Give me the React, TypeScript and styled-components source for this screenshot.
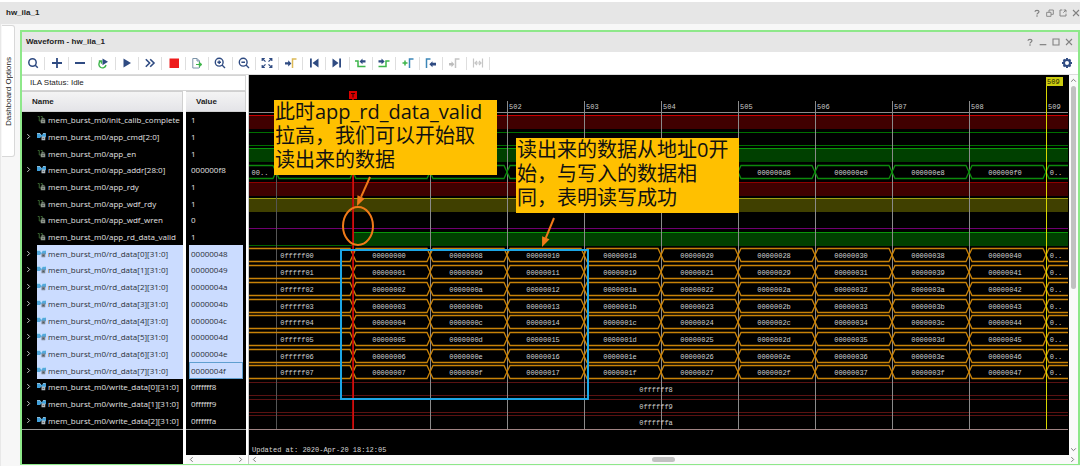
import React from 'react';
import styled, { createGlobalStyle } from 'styled-components';

const GlobalStyle = createGlobalStyle`
  * { box-sizing: border-box; }
  body {
    margin: 0;
    background: #f7f7f7;
    font-family: "Liberation Sans", "Noto Sans CJK SC", sans-serif;
    font-size: 8px;
    color: #222;
  }
  button { font: inherit; color: inherit; }
`;

const ROWS_HEIGHT = 317;

const Page = styled.div`
  display: flex;
  flex-direction: column;
  min-height: 100vh;
  border-top: 2px solid #fff;
  overflow: hidden;
`;

const WindowBar = styled.header<{ $inset?: boolean }>`
  display: flex;
  align-items: center;
  justify-content: space-between;
  height: ${(p) => (p.$inset ? 20 : 22)}px;
  padding: ${(p) => (p.$inset ? '0 5px 0 4px' : '0 0 0 6px')};
  background: #e6e6e6;
`;

const Title = styled.h1`
  margin: 0;
  font-size: 8px;
  line-height: 12px;
  font-weight: bold;
`;

const Controls = styled.div`
  display: flex;
  gap: 5px;
`;

const IconButton = styled.button`
  display: flex;
  align-items: center;
  justify-content: center;
  padding: 0;
  border: 0;
  background: none;
`;

const Workspace = styled.div`
  display: flex;
  flex: 1;
`;

const SideRail = styled.nav`
  width: 20px;
  padding: 1px 0 0 1px;
  border-left: 1px solid #e8e8e8;
`;

const SideTab = styled.button`
  display: flex;
  align-items: center;
  justify-content: center;
  width: 13px;
  height: 132px;
  padding: 0;
  border: 1px solid #d8d8d8;
  border-left: 0;
  border-radius: 0 3px 3px 0;
  background: #fff;
`;

const SideTabLabel = styled.span`
  writing-mode: vertical-rl;
  transform: rotate(180deg);
  white-space: nowrap;
`;

const Frame = styled.main`
  display: flex;
  flex-direction: column;
  flex: 1;
  min-width: 0;
  margin: 6px 0 1px;
  border: 2px solid #8ee88a;
  border-bottom-width: 1px;
  background: #fff;
`;

const Toolbar = styled.div`
  display: flex;
  align-items: center;
  justify-content: space-between;
  height: 23px;
  padding-right: 5px;
  border-bottom: 1px solid #dcdcdc;
`;

const Tools = styled.div`
  display: grid;
  grid-template-columns: repeat(20, 1fr);
  width: 468px;
`;

const ToolButton = styled(IconButton)`
  height: 13px;
  border-right: 1px solid #dedede;
`;

const Panels = styled.div`
  display: flex;
  flex: 1;
`;

const SignalPane = styled.section`
  display: flex;
  flex-direction: column;
  width: 224px;
`;

const Status = styled.div`
  height: 16px;
  padding-left: 8px;
  border: 1px solid #d4d4d4;
  border-left: 0;
  line-height: 14px;
`;

const Columns = styled.div`
  display: flex;
  flex: 1;
  gap: 3px;
`;

const Column = styled.div<{ $wide?: boolean }>`
  display: flex;
  flex-direction: column;
  width: ${(p) => (p.$wide ? 161 : 60)}px;
`;

const Dark = styled.div`
  flex: 1;
  background: #000;
`;

const Table = styled.table`
  display: block;
  border-bottom: 1px solid #9a9a9a;
`;

const TableHead = styled.thead`
  display: block;
`;

const TableBody = styled.tbody`
  display: grid;
  grid-template-rows: repeat(19, 1fr);
  height: ${ROWS_HEIGHT}px;
`;

const Row = styled.tr`
  display: flex;
`;

const HeadCell = styled.th`
  flex: 1;
  height: 21px;
  padding: 0 10px;
  border: 1px solid #d0d0d0;
  border-left: 0;
  background: linear-gradient(#f4f4f4, #e4e4e8);
  font-weight: bold;
  line-height: 20px;
  text-align: left;
`;

const NameCell = styled.td<{ $selected?: boolean }>`
  display: flex;
  flex: 1;
  align-items: center;
  gap: 2px;
  padding: 0 0 1px;
  background: ${(p) => (p.$selected ? 'linear-gradient(90deg, #000 15px, #cbdcff 15px)' : '#000')};
  color: ${(p) => (p.$selected ? '#2a2f38' : '#e2e2e2')};
  font-family: "Open Sans", sans-serif;
  white-space: nowrap;
`;

const Expander = styled(IconButton)`
  width: 13px;
  height: 10px;
`;

const ExpanderGap = styled.span`
  width: 13px;
`;

const ValueCell = styled.td<{ $selected?: boolean; $focused?: boolean }>`
  display: flex;
  flex: 1;
  align-items: center;
  margin: 0 3px;
  padding: 0 1px 1px;
  border: 1px solid ${(p) => (p.$focused ? '#5f9fd0' : 'transparent')};
  background: ${(p) => (p.$selected ? '#cbdcff' : '#000')};
  color: ${(p) => (p.$selected ? '#2a2f38' : '#e2e2e2')};
  font-family: "Open Sans", sans-serif;
`;

const ValueRow = styled(Row)`
  background: #000;
`;

const HScroll = styled.div`
  display: flex;
  align-items: center;
  justify-content: space-between;
  height: 9px;
  padding: 0 2px;
  background: #fafafa;
`;

const VScroll = styled.div`
  display: flex;
  flex-direction: column;
  align-items: center;
  gap: 2px;
  width: 9px;
  padding: 2px 0;
  background: #fafafa;
`;

const Thumb = styled.span<{ $vertical?: boolean }>`
  width: ${(p) => (p.$vertical ? 5 : 23)}px;
  height: ${(p) => (p.$vertical ? 203 : 5)}px;
  margin-bottom: ${(p) => (p.$vertical ? 'auto' : 0)};
  border-radius: 3px;
  background: #c1c1c1;
`;

const WavePane = styled.section`
  display: flex;
  flex-direction: column;
  flex: 1;
  min-width: 0;
  margin-left: 3px;
  box-shadow: -1px 0 0 #c9c9c9;
`;

const WaveRow = styled.div`
  display: flex;
  flex: 1;
`;

const Canvas = styled.div`
  position: relative;
  flex: 1;
  min-width: 0;
  padding-right: 1px;
  background: #000;
  overflow: hidden;
`;

const WaveSvg = styled.svg`
  display: block;
  width: 100%;
  height: 380px;
  font-family: "Liberation Mono", monospace;
  font-size: 7px;
`;

const Note = styled.p<{ $x: number; $y: number }>`
  position: absolute;
  left: ${(p) => p.$x}px;
  top: ${(p) => p.$y}px;
  width: 223px;
  height: 75px;
  margin: 0;
  padding: 0 1px;
  background: #ffc000;
  color: #111;
  font-family: "Open Sans", "Noto Sans CJK SC", sans-serif;
  font-size: 20px;
  line-height: 24px;
  white-space: nowrap;
`;

const NAVY = '#2f4b82';
const GREEN = '#3db54a';
const BLUE = '#3c86b8';

type IconProps = { size?: number; children: React.ReactNode };
const Icon = ({ size = 12, children }: IconProps) => (
  <svg width={size} height={size} viewBox="0 0 12 12" fill="none" aria-hidden="true">
    {children}
  </svg>
);

const tools: { label: string; art: React.ReactNode }[] = [
  {
    label: 'Search',
    art: <g stroke={NAVY} strokeWidth="1.5"><circle cx="5.5" cy="5.5" r="3.7" /><path d="M8 8l2.8 2.8" /></g>,
  },
  { label: 'Add', art: <path d="M1 6h10M6 1v10" stroke={NAVY} strokeWidth="1.8" /> },
  { label: 'Remove', art: <path d="M1 6h10" stroke={NAVY} strokeWidth="2" /> },
  {
    label: 'Run trigger repeatedly',
    art: <><path d="M3.6 4.2A3.6 3.6 0 1 0 9 8M1.8 4h2.7v2.7" stroke={GREEN} strokeWidth="1.4" /><path d="M5.5 1.5l5.5 3.3-5.5 3.4z" fill={NAVY} /></>,
  },
  { label: 'Run trigger', art: <path d="M2.5 1.5l7.5 4.5-7.5 4.5z" fill={NAVY} /> },
  { label: 'Run immediate', art: <path d="M1.8 2.2L5.6 6 1.8 9.8M6.2 2.2L10 6 6.2 9.8" stroke={NAVY} strokeWidth="1.6" /> },
  { label: 'Stop', art: <path d="M1.5 1.5H11V11H1.5z" fill="#ee1c1c" /> },
  {
    label: 'Export',
    art: <><path d="M8 11H1.8V1.5H6L8.5 4v2M6 1.5V4h2.5M8.500 9.5V11" stroke="#7b93a8" /><path d="M5 7.5h5M8.3 5.2l2.6 2.3-2.6 2.3z" stroke={GREEN} fill={GREEN} /></>,
  },
  {
    label: 'Zoom in',
    art: <g stroke={NAVY} strokeWidth="1.4"><circle cx="5.2" cy="5.2" r="3.9" /><path d="M8 8l3 3M3.4 5.2H7M5.2 3.4V7" /></g>,
  },
  {
    label: 'Zoom out',
    art: <g stroke={NAVY} strokeWidth="1.4"><circle cx="5.2" cy="5.2" r="3.9" /><path d="M8 8l3 3M3.4 5.2H7" /></g>,
  },
  {
    label: 'Zoom fit',
    art: <path d="M1.2 4V1.5h2.6M8.2 1.5h2.6V4M10.8 8v2.5H8.2M3.8 10.500H1.2V8M1.5 1.8l3 2.8M10.5 1.8l-3 2.8M1.5 10.2l3-2.8M10.5 10.2l-3-2.8" stroke={NAVY} strokeWidth="1.2" />,
  },
  {
    label: 'Go to cursor',
    art: <><path d="M7.5 11V2h4" stroke="#dcb956" strokeWidth="1.5" /><path d="M0 5.2h3.200V3.2l3.200 3.200-3.200 3.200v-2H0z" fill={NAVY} /></>,
  },
  { label: 'Go to start', art: <path d="M2 1.5h1.8v9H2zM10.5 1.5v9L4.5 6z" fill={NAVY} /> },
  { label: 'Go to end', art: <path d="M8.2 1.5H10v9H8.2zM1.5 1.5v9l6-4.5z" fill={NAVY} /> },
  {
    label: 'Previous transition',
    art: <><path d="M0 4h3v5.5h7.5" stroke={GREEN} strokeWidth="1.5" /><path d="M10.5 3.2h-3V1.5l-3 2.9 3 2.9V5.6h3z" fill={NAVY} /></>,
  },
  {
    label: 'Next transition',
    art: <><path d="M.5 9.5H8V4h3.5" stroke={GREEN} strokeWidth="1.5" /><path d="M.5 3.200h3V1.5l3.200 2.900-3.200 2.900V5.6h-3z" fill={NAVY} /></>,
  },
  {
    label: 'Add marker',
    art: <><path d="M7.5 11V2h4" stroke={BLUE} strokeWidth="1.5" /><path d="M.5 6h5M3 3.5v5" stroke={GREEN} strokeWidth="1.5" /></>,
  },
  {
    label: 'Previous marker',
    art: <><path d="M1.5 11V2h4" stroke={BLUE} strokeWidth="1.5" /><path d="M11 5.8H7.5V4.2L4.3 7.2l3.2 3V8.6H11z" fill={NAVY} /></>,
  },
  {
    label: 'Next marker',
    art: <><path d="M7.5 11V2h4" stroke="#c4c4c4" strokeWidth="1.5" /><path d="M1 6h2.5V4.2l2.8 3-2.8 3V8.4H1z" fill="#bcbcbc" /></>,
  },
  {
    label: 'Swap cursors',
    art: <path d="M1.5 1.5v9M10.5 1.5v9M3 6h6M5 4L3 6l2 2M7 4l2 2-2 2" stroke="#c6c6c6" strokeWidth="1.2" />,
  },
];

const Help = () => (
  <Icon><path d="M3 4.2C3 1.2 9 1.2 9 4.2 9 6 6 6 6 8.2M6 9.5v2" stroke="#808080" strokeWidth="1.8" /></Icon>
);
const Close = () => <Icon><path d="M1.5 1.5l9 9M10.5 1.5l-9 9" stroke="#808080" strokeWidth="1.6" /></Icon>;
const Maximize = () => <Icon><path d="M1.5 1.5h9v9h-9z" stroke="#808080" strokeWidth="1.6" /></Icon>;
const Minimize = () => <Icon><path d="M1 10h10" stroke="#808080" strokeWidth="1.8" /></Icon>;
const Restore = () => <Icon><path d="M1 5h6.5v6H1zM4.5 5V1.5H11V8H7.5" stroke="#808080" strokeWidth="1.3" /></Icon>;
const Float = () => <Icon><path d="M5 1.5H1.5v9h9V7M7 1.5h3.5V5M10.5 1.5l-4 4" stroke="#808080" strokeWidth="1.4" /></Icon>;

const Shrink = styled.span`
  display: flex;
  width: 8px;
  height: 8px;
  svg { width: 8px; height: 8px; }
`;

const WindowControls = ({ items }: { items: [string, React.ReactNode][] }) => (
  <Controls>
    {items.map(([label, art]) => (
      <IconButton key={label} type="button" aria-label={label}>
        <Shrink>{art}</Shrink>
      </IconButton>
    ))}
  </Controls>
);

const Gear = () => (
  <Icon>
    <circle cx="6" cy="6" r="3" stroke={NAVY} strokeWidth="2" />
    <path d="M6 1v1.5M6 9.5V11M1 6h1.5M9.5 6H11M2.5 2.5l1 1M8.5 8.5l1 1M9.5 2.5l-1 1M3.5 8.5l-1 1" stroke={NAVY} strokeWidth="2" />
  </Icon>
);

const Chevron = ({ dir, color = '#777' }: { dir: 'left' | 'right' | 'up' | 'down'; color?: string }) => {
  const paths = { left: 'M8 2L4 6l4 4', right: 'M4 2l4 4-4 4', up: 'M2 8l4-4 4 4', down: 'M2 4l4 4 4-4' };
  return <Icon size={7}><path d={paths[dir]} stroke={color} strokeWidth="1.7" /></Icon>;
};

const BitIcon = () => (
  <Icon size={9}>
    <path d="M1 2h2v6h3M5 2h2v5" stroke="#3f6f35" strokeWidth="1.2" />
    <path d="M5 6h6v5H5z" fill="#8d958b" /><path d="M6.5 6V4.5h3V6" stroke="#8d958b" /><path d="M7 8.5h2" stroke="#333" />
  </Icon>
);

const BusIcon = ({ light }: { light?: boolean }) => (
  <Icon size={9}>
    <path d="M0 2h4l2 3 2-3h4v5H8L6 6 4 8H0z" fill={light ? '#55a9dc' : '#3f9fda'} />
    <path d="M0 2h4l2 3M8 2h3.5" stroke="#b6e0f7" />
    <path d="M6 6h5v5H6z" fill={light ? '#7b8590' : '#b4bcc2'} /><path d="M7.5 8.5h2" stroke="#3c4247" />
  </Icon>
);

type Kind = 'bit' | 'bus';
type Signal = { name: string; value: string; kind: Kind; selected?: boolean };

const range = (n: number) => Array.from({ length: n }, (_, i) => i);
const hex = (n: number, width = 8) => n.toString(16).padStart(width, '0');

const signals: Signal[] = [
  { name: 'init_calib_complete', value: '1', kind: 'bit' },
  { name: 'app_cmd[2:0]', value: '1', kind: 'bus' },
  { name: 'app_en', value: '1', kind: 'bit' },
  { name: 'app_addr[28:0]', value: '000000f8', kind: 'bus' },
  { name: 'app_rdy', value: '1', kind: 'bit' },
  { name: 'app_wdf_rdy', value: '1', kind: 'bit' },
  { name: 'app_wdf_wren', value: '0', kind: 'bit' },
  { name: 'app_rd_data_valid', value: '1', kind: 'bit' },
  ...range(8).map((i): Signal => ({
    name: `rd_data[${i}][31:0]`, value: hex(0x48 + i), kind: 'bus', selected: true,
  })),
  { name: 'write_data[0][31:0]', value: '0ffffff8', kind: 'bus' },
  { name: 'write_data[1][31:0]', value: '0ffffff9', kind: 'bus' },
  { name: 'write_data[2][31:0]', value: '0ffffffa', kind: 'bus' },
];

/* Time axis: one sample clock is CYCLE wide and the trigger sits at sample 500. */
const CYCLE = 77;
const TRIGGER = 104;
const FAR = 4000;
const HIGH = 13;
const rowTop = (i: number) => 40 + Math.round((i * ROWS_HEIGHT) / signals.length);
const at = (n: number) => TRIGGER + n * CYCLE;

const Level = ({ row, line, fill, from = 0 }: { row: number; line: string; fill: string; from?: number }) => (
  <g>
    <rect x={from} y={rowTop(row)} width={FAR} height={HIGH + 1} fill={fill} />
    <rect x={from} y={rowTop(row)} width={FAR} height="1" fill={line} />
  </g>
);

const Low = ({ row, line, width = FAR }: { row: number; line: string; width?: number }) => (
  <rect x="0" y={rowTop(row) + HIGH} width={width} height="1" fill={line} />
);

const BusSegment = ({ row, from, to, line }: { row: number; from: number; to: number; line: string }) => {
  const t = rowTop(row) + 0.5;
  const b = t + HIGH;
  const m = (t + b) / 2;
  return (
    <path
      d={`M${from} ${m}L${from + 3} ${t}H${to - 3}L${to} ${m}L${to - 3} ${b}H${from + 3}Z`}
      fill="none"
      stroke={line}
      strokeWidth="1.3"
    />
  );
};

const BusText = ({ row, x, children }: { row: number; x: number; children: string }) => (
  <text x={x} y={rowTop(row) + 10} textAnchor="middle" fill="#d0d0d0">{children}</text>
);

const DataBus = ({ row, first, base, line }: { row: number; first: string; base: number; line: string }) => (
  <g>
    <BusSegment row={row} from={-10} to={at(0)} line={line} />
    <BusText row={row} x={48}>{first}</BusText>
    {range(9).map((n) => (
      <g key={n}>
        <BusSegment row={row} from={at(n)} to={at(n + 1)} line={line} />
        <BusText row={row} x={at(n) + 36}>{hex(base + n * 8)}</BusText>
      </g>
    ))}
    <BusSegment row={row} from={at(9)} to={FAR} line={line} />
    <BusText row={row} x={at(9) + 10}>0..</BusText>
  </g>
);

/* Addresses are labelled from sample 505 on; the notes cover the earlier ones. */
const AddressBus = () => (
  <g>
    <BusSegment row={3} from={-10} to={at(-1)} line="#0c8a0c" />
    <BusText row={3} x={11}>00..</BusText>
    {range(10).map((n) => (
      <BusSegment key={n} row={3} from={at(n - 1)} to={at(n)} line="#0c8a0c" />
    ))}
    {range(4).map((n) => (
      <BusText key={n} row={3} x={at(n + 5) + 36}>{hex(0xd8 + n * 8)}</BusText>
    ))}
    <BusSegment row={3} from={at(9)} to={FAR} line="#0c8a0c" />
    <BusText row={3} x={at(9) + 10}>0..</BusText>
  </g>
);

const Arrow = ({ x1, y1, x2, y2 }: { x1: number; y1: number; x2: number; y2: number }) => {
  const len = Math.hypot(x2 - x1, y2 - y1);
  const ux = (x2 - x1) / len;
  const uy = (y2 - y1) / len;
  const bx = x2 - ux * 10;
  const by = y2 - uy * 10;
  return (
    <g>
      <line x1={x1} y1={y1} x2={bx} y2={by} stroke="#f07a18" strokeWidth="2" />
      <path d={`M${x2} ${y2}L${bx - uy * 4} ${by + ux * 4}L${bx + uy * 4} ${by - ux * 4}Z`} fill="#f07a18" />
    </g>
  );
};

const Waves = () => (
  <WaveSvg role="img" aria-label="Captured waveform">
    <rect x="0" y="37" width={FAR} height="1" fill="#8c8c8c" />
    <Level row={0} line="#c80000" fill="#400000" />
    <Level row={2} line="#0a960a" fill="#004000" />
    <Level row={4} line="#900000" fill="#400000" />
    <Level row={5} line="#a0a010" fill="#404000" />
    <Level row={7} line="#0a960a" fill="#004000" from={at(0)} />
    <rect x="0" y={rowTop(1)} width={FAR} height="1" fill="#006e00" />
    <Low row={1} line="#006e00" />
    <Low row={6} line="#700070" />
    <Low row={7} line="#006400" width={at(0)} />
    {[16, 17, 18].map((row) => (
      <g key={row}>
        <rect x="0" y={rowTop(row)} width={FAR} height="1" fill="#5a1212" />
        {row < 18 && <Low row={row} line="#5a1212" />}
      </g>
    ))}
    <rect x="0" y="354" width={FAR} height="1" fill="#a08484" />

    {range(10).map((n) => (
      <rect key={n} x={at(n - 1)} y={26} width="1" height="328" fill={n === 0 ? '#555' : '#8a8a8a'} />
    ))}
    {range(8).map((n) => (
      <text key={n} x={at(n + 2) + 2} y="34" fill="#c8c8c8">{502 + n}</text>
    ))}

    <AddressBus />
    {range(8).map((i) => (
      <DataBus key={i} row={8 + i} first={hex(0x0fffff00 + i)} base={i} line="#c88208" />
    ))}
    {['0ffffff8', '0ffffff9', '0ffffffa'].map((v, i) => (
      <BusText key={v} row={16 + i} x={407}>{v}</BusText>
    ))}

    <rect x={at(0) - 1} y="24" width="2" height="330" fill="#d00000" fillOpacity="0.85" />
    <rect x={at(0) - 4} y="16" width="8" height="8" fill="#d80000" />
    <path d={`M${at(0) - 2} 18.5h4M${at(0)} 18.5v4`} stroke="#300" />

    <rect x={at(9)} y="2" width="1" height="352" fill="#d6d600" />
    <rect x={at(9)} y="2" width="17" height="9" fill="#cccc10" />
    <text x={at(9) + 1} y="9" fill="#222200">509</text>

    <rect x="92" y="175" width="247" height="149" fill="none" stroke="#1ca6e6" strokeWidth="2" />
    <ellipse cx="109" cy="151" rx="15" ry="19" fill="none" stroke="#f07a18" strokeWidth="2" />
    <Arrow x1={121} y1={102} x2={108} y2={131} />
    <Arrow x1={305} y1={143} x2={293} y2={172} />
    <text x="3" y="377" fill="#d8d8d8">Updated at: 2020-Apr-20 18:12:05</text>
  </WaveSvg>
);

export default function App() {
  return (
    <>
      <GlobalStyle />
      <Page>
        <WindowBar>
          <Title>hw_ila_1</Title>
          <WindowControls
            items={[['Help', <Help />], ['Restore', <Restore />], ['Float', <Float />], ['Close', <Close />]]}
          />
        </WindowBar>
        <Workspace>
          <SideRail>
            <SideTab type="button"><SideTabLabel>Dashboard Options</SideTabLabel></SideTab>
          </SideRail>
          <Frame>
            <WindowBar $inset>
              <Title as="h2">Waveform - hw_ila_1</Title>
              <WindowControls
                items={[['Help', <Help />], ['Minimize', <Minimize />], ['Maximize', <Maximize />], ['Close', <Close />]]}
              />
            </WindowBar>
            <Toolbar role="toolbar" aria-label="Waveform tools">
              <Tools>
                {tools.map((tool) => (
                  <ToolButton key={tool.label} type="button" aria-label={tool.label}>
                    <Icon>{tool.art}</Icon>
                  </ToolButton>
                ))}
              </Tools>
              <IconButton type="button" aria-label="Settings"><Gear /></IconButton>
            </Toolbar>
            <Panels>
              <SignalPane>
                <Status>ILA Status: Idle</Status>
                <Columns>
                  <Column $wide>
                    <Table>
                      <TableHead><Row><HeadCell scope="col">Name</HeadCell></Row></TableHead>
                      <TableBody>
                        {signals.map((s) => (
                          <Row key={s.name}>
                            <NameCell $selected={s.selected}>
                              {s.kind === 'bus' ? (
                                <Expander type="button" aria-label={`Expand ${s.name}`}>
                                  <Chevron dir="right" color="#d0d0d0" />
                                </Expander>
                              ) : <ExpanderGap />}
                              {s.kind === 'bus' ? <BusIcon light={s.selected} /> : <BitIcon />}
                              <span>mem_burst_m0/{s.name}</span>
                            </NameCell>
                          </Row>
                        ))}
                      </TableBody>
                    </Table>
                    <Dark />
                  </Column>
                  <Column>
                    <Table>
                      <TableHead><Row><HeadCell scope="col">Value</HeadCell></Row></TableHead>
                      <TableBody>
                        {signals.map((s, i) => (
                          <ValueRow key={s.name}>
                            <ValueCell $selected={s.selected} $focused={i === 15}>{s.value}</ValueCell>
                          </ValueRow>
                        ))}
                      </TableBody>
                    </Table>
                    <Dark />
                    <HScroll><Chevron dir="left" /><Chevron dir="right" /></HScroll>
                  </Column>
                </Columns>
              </SignalPane>
              <WavePane>
                <WaveRow>
                  <Canvas>
                    <Waves />
                    <Note $x={25} $y={25}>
                      此时app_rd_data_valid<br />拉高，我们可以开始取<br />读出来的数据
                    </Note>
                    <Note $x={267} $y={63}>
                      读出来的数据从地址0开<br />始，与写入的数据相<br />同，表明读写成功
                    </Note>
                  </Canvas>
                  <VScroll><Chevron dir="up" /><Thumb $vertical /><Chevron dir="down" /></VScroll>
                </WaveRow>
                <HScroll><Chevron dir="left" /><Thumb /><Chevron dir="right" /></HScroll>
              </WavePane>
            </Panels>
          </Frame>
        </Workspace>
      </Page>
    </>
  );
}
